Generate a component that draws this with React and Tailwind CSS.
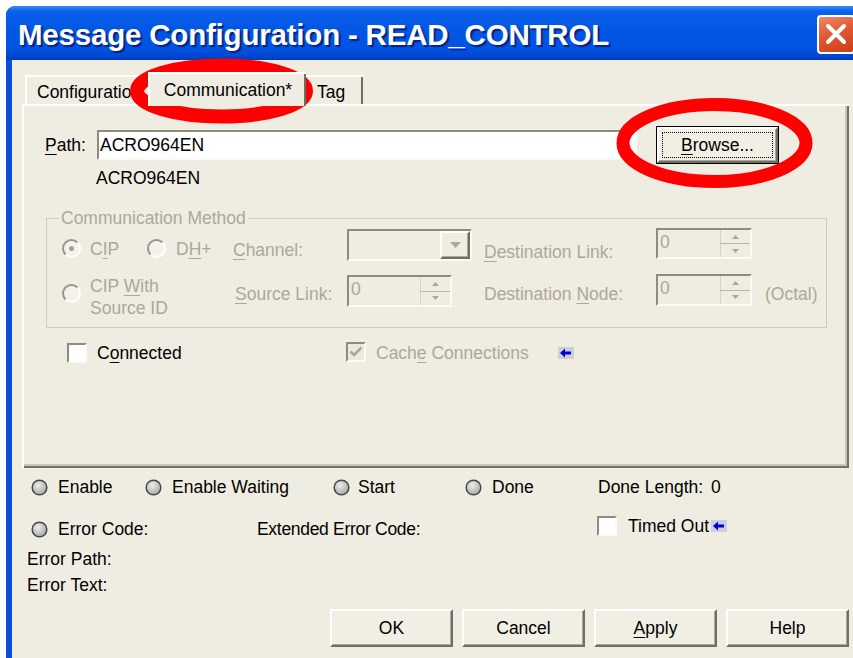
import React from "react";

const sunken =
  "border-2 border-t-[#8e8b7f] border-l-[#8e8b7f] border-b-[#fbfaf5] border-r-[#fbfaf5]";
const raised =
  "border-2 border-t-white border-l-white border-b-[#716f64] border-r-[#716f64] shadow-[inset_-1px_-1px_0_#aca899]";
const dim = "text-[#aca899]";

function U({ children }) {
  return <span className="underline decoration-1 underline-offset-[3px]">{children}</span>;
}

function Led() {
  return (
    <svg width="17" height="17" viewBox="0 0 17 17" className="shrink-0">
      <defs>
        <radialGradient id="ledfill" cx="0.4" cy="0.35" r="0.7">
          <stop offset="0" stopColor="#ececec" />
          <stop offset="1" stopColor="#a6a6a6" />
        </radialGradient>
      </defs>
      <circle cx="8.5" cy="8.5" r="7.3" fill="url(#ledfill)" stroke="#474747" strokeWidth="1.5" />
    </svg>
  );
}

function Radio({ dot }) {
  return (
    <div className="w-[19px] h-[19px] shrink-0 rounded-full border-2 border-t-[#9a978a] border-l-[#9a978a] border-b-white border-r-white bg-[#f4f2ea] flex items-center justify-center">
      {dot && <div className="w-[5px] h-[5px] rounded-full bg-[#a3a091]" />}
    </div>
  );
}

function Check({ checked, disabled }) {
  return (
    <div
      className={`w-[20px] h-[20px] shrink-0 ${sunken} ${disabled ? "bg-[#ece9dd]" : "bg-white"} flex items-center justify-center`}
    >
      {checked && (
        <svg width="14" height="12" viewBox="0 0 14 12">
          <path d="M1.5 5.5 L5 9 L12.5 1.5" fill="none" stroke="#aca899" strokeWidth="2.6" />
        </svg>
      )}
    </div>
  );
}

function BackArrow() {
  return (
    <svg width="16" height="12" viewBox="0 0 16 12" className="shrink-0">
      <rect x="0" y="0" width="16" height="12" fill="#cdcddc" />
      <path d="M2 6 L7 1.5 L7 4.5 L13 4.5 L13 7.5 L7 7.5 L7 10.5 Z" fill="#0000c8" />
    </svg>
  );
}

function Spin({ w, h }) {
  return (
    <div className={`${w} ${h} shrink-0 ${sunken} bg-[#efece0] flex`}>
      <span className={`flex-1 pl-[2px] leading-[24px] ${dim}`}>0</span>
      <div className="w-[30px] flex flex-col">
        <div className="flex-1 border-b border-[#b9b6a8] border-l border-l-[#d6d3c5] flex items-center justify-center">
          <svg width="7" height="4" viewBox="0 0 7 4">
            <path d="M3.5 0 L7 4 L0 4 Z" fill="#aca899" />
          </svg>
        </div>
        <div className="flex-1 border-l border-l-[#d6d3c5] flex items-center justify-center">
          <svg width="7" height="4" viewBox="0 0 7 4">
            <path d="M0 0 L7 0 L3.5 4 Z" fill="#aca899" />
          </svg>
        </div>
      </div>
    </div>
  );
}

function Combo() {
  return (
    <div className={`w-[125px] h-[32px] shrink-0 ${sunken} bg-[#efece0] flex justify-end`}>
      <div className={`w-[30px] h-full ${raised} flex items-center justify-center`}>
        <svg width="11" height="6" viewBox="0 0 11 6">
          <path d="M0 0 L11 0 L5.5 6 Z" fill="#aca899" />
        </svg>
      </div>
    </div>
  );
}

function Btn({ children }) {
  return (
    <div
      className={`w-[123px] h-[38px] ${raised} bg-[#f1efe4] flex items-center justify-center text-black`}
    >
      {children}
    </div>
  );
}

export default function App() {
  return (
    <div className="relative w-[853px] h-[658px] overflow-hidden bg-white font-['Liberation_Sans',Arial,sans-serif] text-[17.5px] leading-[20px] text-black">
      {/* dialog window */}
      <div className="ml-[6px] mt-[6px] w-[880px] h-[660px] rounded-t-[9px] bg-[#0b4fd9] overflow-hidden flex flex-col">
        {/* caption */}
        <div className="h-[54px] shrink-0 flex items-center pl-[12px] pt-[4px] bg-[linear-gradient(180deg,#3d8ff6_0%,#0b61ea_9%,#0357e5_40%,#0153e3_78%,#0047d2_93%,#003bb5_100%)]">
          <span className="w-[799px] shrink-0 text-white font-bold text-[29.5px] leading-[34px] tracking-[-0.2px] [text-shadow:2px_2px_1px_#0b2380]">
            Message Configuration - READ_CONTROL
          </span>
          <div className="w-[38px] h-[39px] shrink-0 -mt-[2px] rounded-[4px] border-2 border-white bg-[linear-gradient(160deg,#ef8a62_0%,#e05a33_45%,#cc3d17_100%)] flex items-center justify-center">
            <svg width="22" height="22" viewBox="0 0 22 22">
              <path d="M3 3 L19 19 M19 3 L3 19" stroke="white" strokeWidth="4" strokeLinecap="round" />
            </svg>
          </div>
        </div>

        {/* client area */}
        <div className="flex-1 ml-[6px] bg-[#efede1] pt-[12px]">
          {/* tabs */}
          <div className="ml-[10px] h-[32px] flex items-end pl-[3px]">
            <div className="w-[123px] h-[29px] border-t-2 border-l-2 border-white overflow-hidden whitespace-nowrap pl-[10px] pt-[5px]">
              Configuration
            </div>
            <div className="w-[158px] h-[34px] -mb-[2px] relative z-10 bg-[#efede1] border-t-2 border-l-2 border-white shadow-[inset_-2px_0_0_#716f64] pt-[6px] text-center">
              Communication*
            </div>
            <div className="w-[57px] h-[29px] border-t-2 border-white shadow-[inset_-2px_0_0_#716f64] pl-[11px] pt-[5px]">
              Tag
            </div>
          </div>

          {/* tab page */}
          <div className="ml-[10px] w-[827px] h-[364px] border-t-2 border-l-2 border-white shadow-[inset_-2px_-2px_0_#716f64,inset_-4px_-4px_0_#c9c6b8] pl-[21px]">
            <div className="mt-[20px] h-[38px] flex items-center">
              <span className="w-[52px] shrink-0">
                <U>P</U>ath:
              </span>
              <div className={`w-[540px] h-[30px] shrink-0 ${sunken} bg-white pl-[1px] leading-[26px]`}>
                ACRO964EN
              </div>
              <div className="ml-[19px] w-[123px] h-[38px] shrink-0 border border-black">
                <div className={`w-full h-full ${raised} bg-[#f1efe4] p-[3px]`}>
                  <div className="w-full h-full border border-dotted border-black flex items-center justify-center">
                    <span>
                      <U>B</U>rowse...
                    </span>
                  </div>
                </div>
              </div>
            </div>

            <div className="mt-[4px] ml-[51px] h-[20px]">ACRO964EN</div>

            {/* communication method group */}
            <fieldset className="mt-[20px] ml-[1px] w-[781px] h-[120px] border border-[#cfccbd] p-0 m-0">
              <legend className={`ml-[12px] px-[2px] leading-[20px] ${dim}`}>Communication Method</legend>
              <div className="pl-[15px]">
                <div className={`mt-[1px] h-[33px] flex items-start ${dim}`}>
                  <div className="w-[85px] shrink-0 flex items-start">
                    <div className="mt-[10px]">
                      <Radio dot />
                    </div>
                    <span className="ml-[9px] mt-[10px]">
                      C<U>I</U>P
                    </span>
                  </div>
                  <div className="w-[86px] shrink-0 flex items-start">
                    <div className="mt-[10px]">
                      <Radio />
                    </div>
                    <span className="ml-[10px] mt-[10px]">
                      D<U>H</U>+
                    </span>
                  </div>
                  <span className="w-[114px] shrink-0 mt-[11px]">
                    <U>C</U>hannel:
                  </span>
                  <Combo />
                  <span className="ml-[12px] w-[172px] shrink-0 mt-[13px]">
                    <U>D</U>estination Link:
                  </span>
                  <div className="-mt-[1px]">
                    <Spin w="w-[96px]" h="h-[31px]" />
                  </div>
                </div>

                <div className={`mt-[12px] h-[34px] flex items-start ${dim}`}>
                  <div className="w-[173px] shrink-0 flex items-start">
                    <div className="mt-[10px]">
                      <Radio />
                    </div>
                    <span className="ml-[9px] mt-[1px] leading-[22px]">
                      CIP <U>W</U>ith
                      <br />
                      Source ID
                    </span>
                  </div>
                  <span className="w-[112px] shrink-0 mt-[10px]">
                    <U>S</U>ource Link:
                  </span>
                  <div className="mt-[1px]">
                    <Spin w="w-[105px]" h="h-[32px]" />
                  </div>
                  <span className="ml-[32px] w-[172px] shrink-0 mt-[10px]">
                    Destination <U>N</U>ode:
                  </span>
                  <Spin w="w-[96px]" h="h-[32px]" />
                  <span className="ml-[13px] mt-[10px]">(Octal)</span>
                </div>
              </div>
            </fieldset>

            <div className="mt-[15px] h-[20px] flex items-center">
              <div className="ml-[22px] w-[279px] shrink-0 flex items-center">
                <Check />
                <span className="ml-[10px]">
                  C<U>o</U>nnected
                </span>
              </div>
              <div className="-mt-[2px]">
                <Check checked disabled />
              </div>
              <span className={`ml-[10px] ${dim}`}>
                Cach<U>e</U> Connections
              </span>
              <span className="ml-[29px]">
                <BackArrow />
              </span>
            </div>
          </div>

          {/* status area */}
          <div className="pl-[19px]">
            <div className="mt-[9px] h-[20px] flex items-center">
              <div className="w-[114px] shrink-0 flex items-center">
                <Led />
                <span className="ml-[10px]">Enable</span>
              </div>
              <div className="w-[188px] shrink-0 flex items-center">
                <Led />
                <span className="ml-[10px]">Enable Waiting</span>
              </div>
              <div className="w-[132px] shrink-0 flex items-center">
                <Led />
                <span className="ml-[8px]">Start</span>
              </div>
              <div className="w-[133px] shrink-0 flex items-center">
                <Led />
                <span className="ml-[10px]">Done</span>
              </div>
              <span>Done Length:</span>
              <span className="ml-[8px]">0</span>
            </div>

            <div className="mt-[22px] h-[20px] flex items-center">
              <div className="w-[226px] shrink-0 flex items-center">
                <Led />
                <span className="ml-[10px]">Error Code:</span>
              </div>
              <span className="w-[340px] shrink-0 tracking-[-0.3px]">Extended Error Code:</span>
              <div className="-mt-[6px] flex items-center">
                <Check />
                <span className="ml-[11px]">Timed Out</span>
                <span className="ml-[2px]">
                  <BackArrow />
                </span>
              </div>
            </div>

            <div className="mt-[10px] -ml-[4px] h-[20px]">Error Path:</div>
            <div className="mt-[6px] -ml-[4px] h-[20px]">Error Text:</div>

            <div className="mt-[14px] ml-[299px] flex gap-[9px]">
              <Btn>OK</Btn>
              <Btn>Cancel</Btn>
              <Btn>
                <span>
                  <U>A</U>pply
                </span>
              </Btn>
              <Btn>Help</Btn>
            </div>
          </div>
        </div>
      </div>

      {/* red annotation rings */}
      <svg className="absolute left-0 top-0 pointer-events-none" width="853" height="658" viewBox="0 0 853 658">
        <ellipse cx="221.5" cy="91" rx="84.5" ry="25.5" fill="none" stroke="#ff0000" strokeWidth="14" />
        <ellipse cx="714.5" cy="143" rx="91.5" ry="38.5" fill="none" stroke="#ff0000" strokeWidth="13" />
      </svg>
    </div>
  );
}
